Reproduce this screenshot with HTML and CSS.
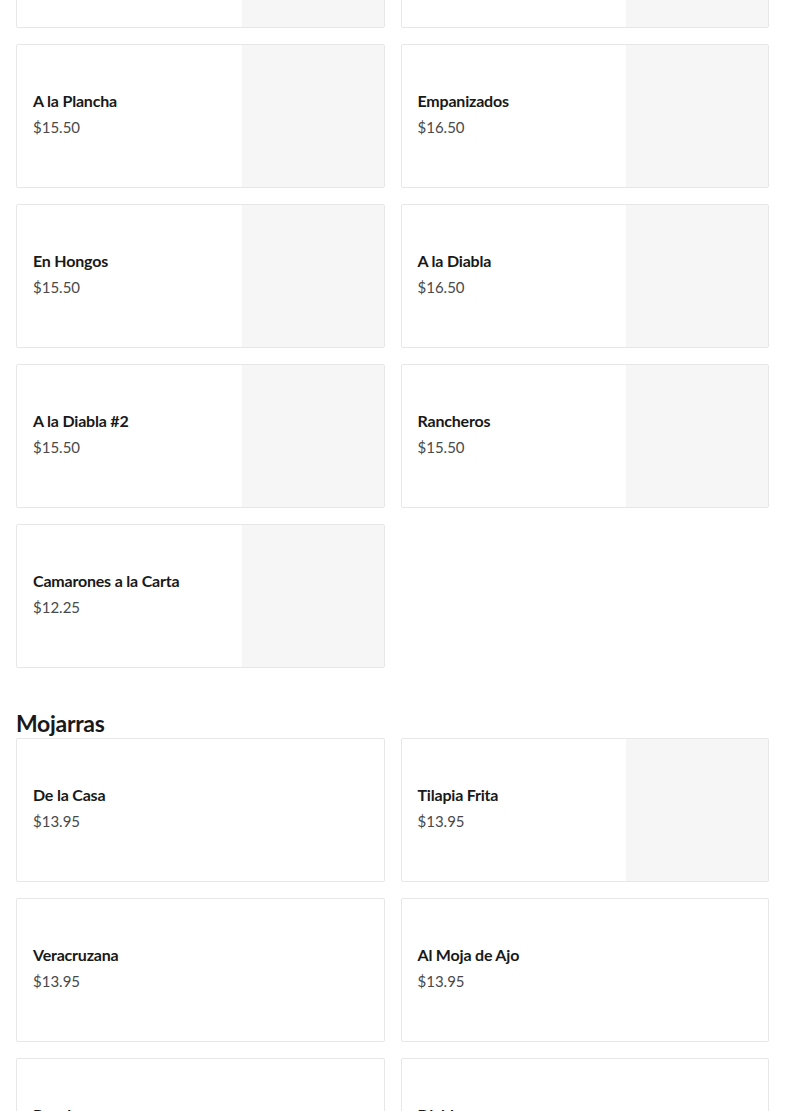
FILE: index.html
```html
<!DOCTYPE html>
<html lang="es">
<head>
<meta charset="utf-8">
<title>Menu</title>
<link rel="stylesheet" href="styles.css">
</head>
<body>
<main class="page">
  <section class="section">
    <div class="grid">
      <div class="card"><div class="info"><div class="name">Al Mojo de Ajo</div><div class="price">$15.50</div></div><div class="thumb"></div></div>
      <div class="card"><div class="info"><div class="name">Rancheros</div><div class="price">$15.50</div></div><div class="thumb"></div></div>
      <div class="card"><div class="info"><div class="name">A la Plancha</div><div class="price">$15.50</div></div><div class="thumb"></div></div>
      <div class="card"><div class="info"><div class="name">Empanizados</div><div class="price">$16.50</div></div><div class="thumb"></div></div>
      <div class="card"><div class="info"><div class="name">En Hongos</div><div class="price">$15.50</div></div><div class="thumb"></div></div>
      <div class="card"><div class="info"><div class="name">A la Diabla</div><div class="price">$16.50</div></div><div class="thumb"></div></div>
      <div class="card"><div class="info"><div class="name">A la Diabla #2</div><div class="price">$15.50</div></div><div class="thumb"></div></div>
      <div class="card"><div class="info"><div class="name">Rancheros</div><div class="price">$15.50</div></div><div class="thumb"></div></div>
      <div class="card"><div class="info"><div class="name">Camarones a la Carta</div><div class="price">$12.25</div></div><div class="thumb"></div></div>
    </div>
  </section>
  <section class="section">
    <h2 class="section-title">Mojarras</h2>
    <div class="grid">
      <div class="card"><div class="info"><div class="name">De la Casa</div><div class="price">$13.95</div></div></div>
      <div class="card"><div class="info"><div class="name">Tilapia Frita</div><div class="price">$13.95</div></div><div class="thumb"></div></div>
      <div class="card"><div class="info"><div class="name">Veracruzana</div><div class="price">$13.95</div></div></div>
      <div class="card"><div class="info"><div class="name">Al Moja de Ajo</div><div class="price">$13.95</div></div></div>
      <div class="card"><div class="info"><div class="name">Rancheros</div><div class="price">$13.95</div></div></div>
      <div class="card"><div class="info"><div class="name">Diabla</div><div class="price">$13.95</div></div></div>
    </div>
  </section>
</main>
</body>
</html>
```
FILE: styles.css
```css
* { box-sizing: border-box; }
html, body { margin: 0; padding: 0; background: #fff; }
body {
  font-family: "Lato", "Inter", "Liberation Sans", sans-serif;
  color: #191919;
  overflow: hidden;
}
.page {
  padding: 0 16px;
  margin-top: -116px;
}
.section { margin-bottom: 40px; }
.section-title {
  margin: 0;
  font-size: 23px;
  line-height: 30px;
  font-weight: 700;
  color: #191919;
  letter-spacing: -0.3px;
}
.grid {
  display: grid;
  grid-template-columns: 1fr 1fr;
  gap: 16px;
}
.card {
  display: flex;
  height: 144px;
  border: 1px solid #e7e7e7;
  border-radius: 2px;
  overflow: hidden;
  background: #fff;
}
.info {
  flex: 1;
  display: flex;
  flex-direction: column;
  justify-content: center;
  padding: 0 16px 4px;
  gap: 6px;
}
.name {
  font-size: 16px;
  line-height: 20px;
  font-weight: 700;
  color: #191919;
  letter-spacing: -0.2px;
}
.price {
  font-size: 15px;
  line-height: 20px;
  color: #494949;
}
.thumb {
  width: 142px;
  flex: none;
  background: #f6f6f6;
}
```
